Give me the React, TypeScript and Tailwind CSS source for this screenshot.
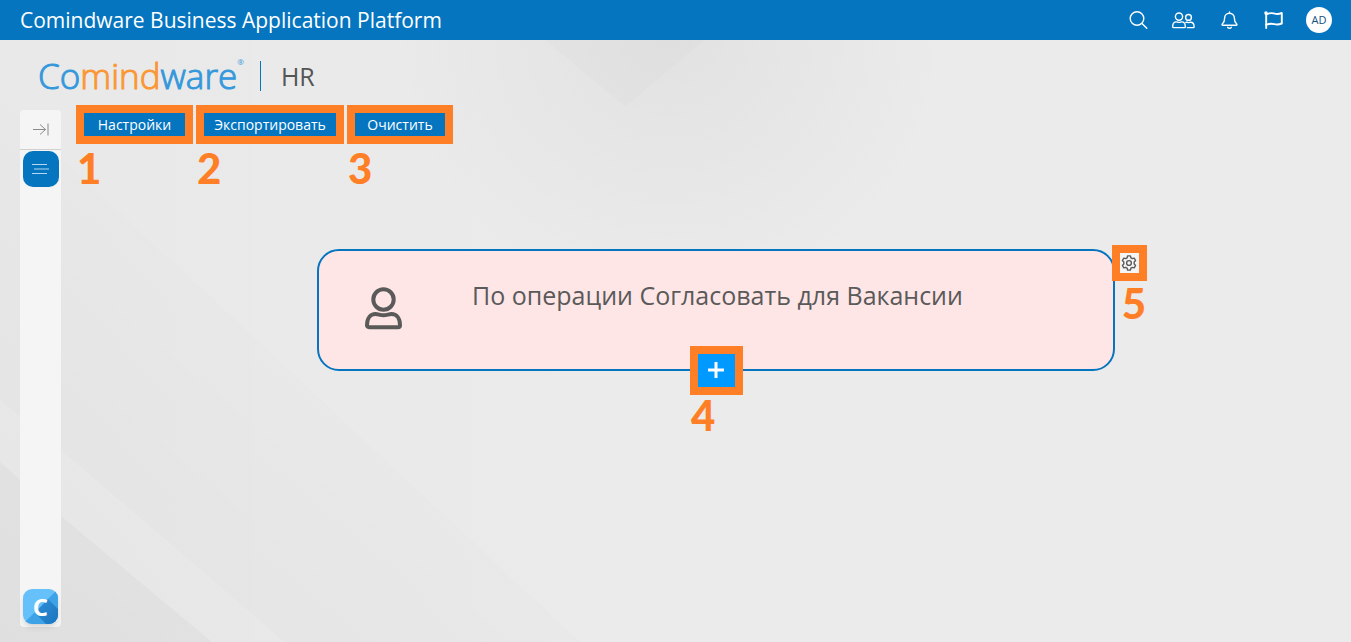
import type { ReactNode } from "react";

const toolbarActions = [
  { id: 1, title: "Настройки", className: "w-[117px]" },
  { id: 2, title: "Экспортировать", className: "w-[148px]" },
  { id: 3, title: "Очистить", className: "w-[106px]" },
];

function Step({ children }: { children: ReactNode }) {
  return (
    <span className="px-px font-['Lato',sans-serif] text-[42px] leading-10 font-black text-[#ff7f27]">
      {children}
    </span>
  );
}

function Backdrop() {
  return (
    <svg
      className="absolute inset-0 -z-10 h-full w-full"
      viewBox="0 0 1351 642"
      preserveAspectRatio="none"
      aria-hidden="true"
    >
      <defs>
        <radialGradient id="shade" gradientUnits="userSpaceOnUse" cx="670" cy="30" r="280">
          <stop offset="0" stopColor="#000" stopOpacity="0.04" />
          <stop offset="1" stopColor="#000" stopOpacity="0" />
        </radialGradient>
        <linearGradient id="corner" gradientUnits="userSpaceOnUse" x1="0" y1="642" x2="330" y2="250">
          <stop offset="0" stopColor="#000" stopOpacity="0.03" />
          <stop offset="1" stopColor="#000" stopOpacity="0" />
        </linearGradient>
        <linearGradient id="left" x1="0" y1="0" x2="1" y2="0">
          <stop offset="0" stopColor="#000" stopOpacity="0.01" />
          <stop offset="1" stopColor="#000" stopOpacity="0" />
        </linearGradient>
      </defs>
      <rect width="1351" height="642" fill="#ebebeb" />
      <rect width="700" height="642" fill="url(#left)" />
      <rect x="380" y="40" width="580" height="280" fill="url(#shade)" />
      <path d="M705 40L625 107L545 40Z" fill="#000" fillOpacity="0.01" />
      <path d="M0 100L580 642H0Z" fill="url(#corner)" />
      <path d="M0 462L61 516L212 642H0Z" fill="#000" fillOpacity="0.012" />
      <path d="M0 400L61 450L285 642H212L61 516L0 462Z" fill="#fff" fillOpacity="0.12" />
    </svg>
  );
}

function SearchIcon() {
  return (
    <svg width="19" height="19" viewBox="0 0 19 19" fill="none" stroke="currentColor" strokeWidth="1.4" strokeLinecap="round">
      <circle cx="8" cy="7.500" r="6.800" />
      <path d="M13 12.500l4.800 4.800" />
    </svg>
  );
}

function UsersIcon() {
  return (
    <svg width="23" height="17" viewBox="0 0 23 17" fill="none" stroke="currentColor" strokeWidth="1.4" strokeLinejoin="round">
      <circle cx="7" cy="4.600" r="3.600" />
      <path d="M1.600 15.600c-.6 0-.9-.3-.9-.9 0-3.200 1.300-4.800 3.600-4.800.9 0 1.500.5 2.700.5s1.800-.5 2.700-.5c2.300 0 3.600 1.600 3.600 4.800 0 .6-.3.900-.9.900z" />
      <circle cx="16.500" cy="5.400" r="2.900" />
      <path d="M13.300 10.700c.4-.3.900-.5 1.400-.5.700 0 1.100.4 1.900.4s1.200-.4 2-.4c2.200 0 3.500 1.700 3.500 4.500 0 .6-.3.900-.8.900h-6.500" />
    </svg>
  );
}

function BellIcon() {
  return (
    <svg width="17" height="18" viewBox="0 0 17 18" fill="none" stroke="currentColor" strokeWidth="1.4" strokeLinecap="round" strokeLinejoin="round">
      <path d="M8.500 1v1.200M8.500 2.200c-3 0-4.900 2.200-4.900 5 0 3.300-.8 4.500-2.100 5.500-.8.700-.5 1.500.4 1.500h13.200c.9 0 1.200-.8.400-1.500-1.300-1-2.100-2.200-2.100-5.500 0-2.800-1.900-5-4.900-5z" />
      <path d="M6.700 16.300c.8 1.200 2.800 1.200 3.600 0" />
    </svg>
  );
}

function FlagIcon() {
  return (
    <svg width="19" height="18" viewBox="0 0 19 18" fill="none" stroke="currentColor" strokeWidth="1.9" strokeLinecap="round" strokeLinejoin="round">
      <circle cx="2" cy="2" r="1.800" fill="currentColor" stroke="none" />
      <path d="M2.200 2v15" />
      <path d="M2.200 3.500c4.500-2 6.500-1.600 8.700-.8 2.200.7 4 .5 6.900-.7v10.500c-3.500 1.400-5.200 1.300-7.500.6-2.300-.7-4.600-.7-8.100.6" />
    </svg>
  );
}

function GearIcon() {
  return (
    <svg className="shrink-0" width="17" height="16" viewBox="0 0 17 16" fill="none" stroke="currentColor" strokeWidth="1.4" strokeLinejoin="round">
      <path d="M6.600.9h2.800l.5 1.900 1.400.8 1.900-.5 1.400 2.400-1.400 1.400v2.200l1.400 1.400-1.400 2.400-1.900-.5-1.400.8-.5 1.900H6.600l-.5-1.900-1.400-.8-1.900.5-1.400-2.400 1.400-1.400V6.900L1.400 5.500l1.400-2.400 1.900.5 1.400-.8z" />
      <circle cx="8" cy="8" r="2.400" />
    </svg>
  );
}

function Header() {
  return (
    <header className="flex h-10 items-center justify-between bg-[#0575bf] pr-[19px] pl-5 text-white">
      <h1 className="text-[21px] leading-7">Comindware Business Application Platform</h1>
      <div className="flex items-center gap-[23px]">
        <button type="button" aria-label="Поиск" className="px-px"><SearchIcon /></button>
        <button type="button" aria-label="Пользователи"><UsersIcon /></button>
        <button type="button" aria-label="Уведомления" className="px-[3px]"><BellIcon /></button>
        <button type="button" aria-label="Флаг"><FlagIcon /></button>
        <button type="button" className="size-[26px] rounded-full bg-white text-[11px] font-medium text-[#12507e]">
          AD
        </button>
      </div>
    </header>
  );
}

function Brand() {
  return (
    <div className="flex h-[65px] items-center pt-1.5 pl-[38px]">
      <div className="flex items-center font-light text-[#3598db]">
        <span className="text-[35px] leading-10 [-webkit-text-stroke:1px]">
          Co<span className="text-[#fb9735]">mind</span>ware
        </span>
        <span className="self-start text-[8px] leading-3 font-normal">®</span>
      </div>
      <span className="ml-4 h-[30px] w-px bg-[#0575bf]" />
      <h2 className="ml-5 text-[25px] leading-10 text-[#555]">HR</h2>
    </div>
  );
}

function Sidebar() {
  return (
    <nav className="mt-[5px] mb-[15px] ml-5 flex w-[41px] flex-col items-center rounded bg-[#f5f5f5]">
      <button
        type="button"
        aria-label="Развернуть"
        className="flex h-10 w-full items-center justify-center border-b border-[#d0d0d0] text-[#8a8a8a]"
      >
        <svg width="16" height="14" viewBox="0 0 16 14" fill="none" stroke="currentColor">
          <path d="M0 6.500h12.500M7 1.500L12.500 6.500L7 11.500M15 .5v12" />
        </svg>
      </button>
      <button
        type="button"
        aria-label="Меню"
        className="mt-px flex size-9 items-center justify-center rounded-[10px] bg-[#0575bf] text-[#b5d8f0]"
      >
        <svg width="18" height="12" viewBox="0 0 18 12" fill="none" stroke="currentColor">
          <path d="M0 1.500h15M2 6h15M0 10.500h15" />
        </svg>
      </button>
      <a href="#" aria-label="Comindware" className="mt-auto mb-[3px]">
        <span className="relative flex size-[35px] items-center justify-center overflow-hidden rounded-[9px] shadow-md">
          <svg className="absolute inset-0" width="35" height="35" viewBox="0 0 35 35">
            <defs>
              <linearGradient id="fold" x1="0" y1="0" x2="1" y2="1">
                <stop offset="0.200" stopColor="#2a8cd3" />
                <stop offset="1" stopColor="#1b74bd" />
              </linearGradient>
            </defs>
            <rect width="35" height="35" fill="#66c0fa" />
            <path d="M35 0L0 35H35Z" fill="#3da2e6" />
            <path d="M25 10L35 20V35H23L12 24Z" fill="url(#fold)" />
          </svg>
          <b className="relative text-[24px] leading-8 text-white">C</b>
        </span>
      </a>
    </nav>
  );
}

function OperationCard() {
  return (
    <article className="relative flex h-[122px] w-full max-w-[798px] rounded-[22px] border-2 border-[#0575bf] bg-[#ffe6e6] text-[#5a5a5a]">
      <svg className="mt-9 ml-[46px] shrink-0" width="38" height="43" viewBox="0 0 38 43" fill="none" stroke="currentColor" strokeWidth="4" strokeLinejoin="round">
        <circle cx="18.500" cy="12.500" r="10.200" />
        <path d="M4 40.200c-1.300 0-2-.8-2-2C2 31 5.500 27 10.500 27c2.800 0 4.500 1.300 8 1.300s5.200-1.300 8-1.300c5 0 8.500 4 8.500 11.200 0 1.200-.7 2-2 2z" />
      </svg>
      <p className="mt-[26px] ml-[69px] text-[25px] leading-9">По операции Согласовать для Вакансии</p>

      <div className="absolute top-[95px] left-1/2 -ml-[26px] flex w-[53px] flex-col items-start">
        <button
          type="button"
          aria-label="Добавить"
          className="flex h-[49px] w-full items-center justify-center border-8 border-[#ff7f27] bg-[#0099ff] text-white"
        >
          <svg width="17" height="17" viewBox="0 0 17 17" stroke="currentColor" strokeWidth="3">
            <path d="M8 0v16M0 8h16" />
          </svg>
        </button>
        <Step>4</Step>
      </div>

      <div className="absolute -top-1.5 -right-[34px] flex w-[35px] flex-col items-end gap-0.5">
        <button
          type="button"
          aria-label="Настроить"
          className="flex h-9 w-full items-center justify-center border-8 border-[#ff7f27] bg-[#f5f5f5]"
        >
          <GearIcon />
        </button>
        <Step>5</Step>
      </div>
    </article>
  );
}

export default function App() {
  return (
    <div className="relative isolate flex min-h-screen flex-col font-['Open_Sans','Noto_Sans',sans-serif]">
      <Backdrop />
      <Header />
      <Brand />
      <div className="flex flex-1">
        <Sidebar />
        <main className="flex-1">
          <div className="flex gap-[3px] pl-[15px]">
            {toolbarActions.map((action) => (
              <div key={action.id} className="flex flex-col items-start gap-1">
                <button
                  type="button"
                  className={`h-[39px] border-8 border-[#ff7f27] bg-[#0575bf] text-[14px] leading-5 whitespace-nowrap text-white ${action.className}`}
                >
                  {action.title}
                </button>
                <Step>{action.id}</Step>
              </div>
            ))}
          </div>
          <div className="mt-[61px] flex justify-center pl-5">
            <OperationCard />
          </div>
        </main>
      </div>
    </div>
  );
}
